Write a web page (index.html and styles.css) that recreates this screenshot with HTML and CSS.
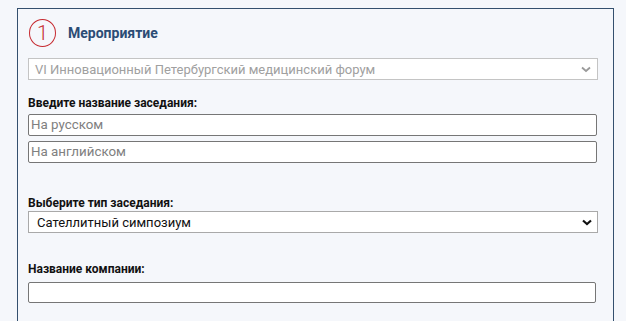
FILE: index.html
```html
<!DOCTYPE html>
<html lang="ru">
<head>
<meta charset="utf-8">
<link rel="stylesheet" href="styles.css">
</head>
<body>
<div class="panel">
  <div class="head">
    <div class="step">1</div>
    <div class="title">Мероприятие</div>
  </div>
  <div class="select disabled">
    <span>VI Инновационный Петербургский медицинский форум</span>
    <svg class="chev" width="10" height="7" viewBox="0 0 10 7"><path d="M1 1.5 L5 5 L9 1.5" fill="none" stroke="#9a9a9a" stroke-width="1.8"/></svg>
  </div>
  <div class="label l1">Введите название заседания:</div>
  <div class="input">На русском</div>
  <div class="input i2">На английском</div>
  <div class="label l2">Выберите тип заседания:</div>
  <div class="select s2">
    <span>Сателлитный симпозиум</span>
    <svg class="chev" width="10" height="7" viewBox="0 0 10 7"><path d="M1 1.5 L5 5 L9 1.5" fill="none" stroke="#111" stroke-width="2.2"/></svg>
  </div>
  <div class="label l3">Название компании:</div>
  <div class="input i3"></div>
</div>
</body>
</html>
```
FILE: styles.css
```css
html, body { margin: 0; padding: 0; }
body {
  background: #f5f7fb;
  font-family: Roboto, "Noto Sans", sans-serif;
  width: 626px;
  height: 321px;
  overflow: hidden;
}
.panel {
  margin: 8px 0 0 17px;
  width: 597px;
  height: 313px;
  border: 1px solid #34506e;
  border-bottom: none;
  box-sizing: border-box;
  padding: 9px 16px 0 10px;
}
.head {
  display: flex;
  align-items: center;
  height: 29px;
}
.step {
  width: 27px;
  height: 28px;
  border: 1.6px solid #c62a30;
  border-radius: 50%;
  box-sizing: border-box;
  color: #c62a30;
  font-size: 20px;
  font-weight: 300;
  display: flex;
  align-items: center;
  justify-content: center;
  margin-left: 1px;
  line-height: 1;
}
.title {
  margin-left: 12px;
  color: #2b4c75;
  font-weight: 700;
  font-size: 14px;
}
.select {
  margin-top: 11px;
  height: 22px;
  border: 1px solid #a9a9a9;
  background: #fff;
  box-sizing: border-box;
  display: flex;
  align-items: center;
  padding: 0 6px 0 6px;
  font-size: 13px;
  color: #111;
  width: 570px;
}
.select span { flex: 1; }
.select.disabled { border-color: #c4c4c4; color: #a0a0a0; }
.chev { display: block; }
.label {
  font-size: 12px;
  font-weight: 700;
  color: #111;
  line-height: 14px;
}
.l1 { margin-top: 16px; }
.l2 { margin-top: 33px; }
.l3 { margin-top: 29px; }
.input {
  margin-top: 4px;
  height: 22px;
  width: 569px;
  border: 1px solid #767676;
  border-radius: 2px;
  background: #fff;
  box-sizing: border-box;
  padding: 0 2px;
  font-size: 13.33px;
  color: #808080;
  line-height: 20px;
}
.i2 { margin-top: 5px; }
.s2 { margin-top: 1px; padding-left: 8px; padding-right: 5px; }
.i3 { width: 568px; height: 21px; margin-top: 6px; }
```
